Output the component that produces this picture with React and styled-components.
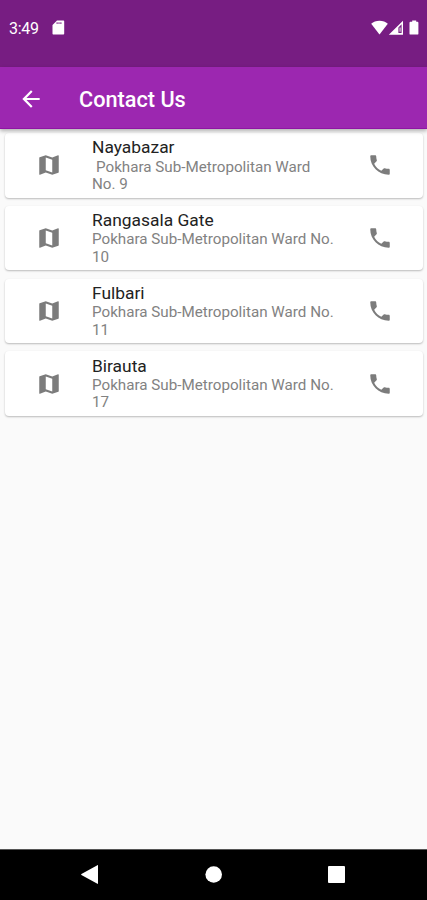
import styled, { createGlobalStyle } from 'styled-components';

const GlobalStyle = createGlobalStyle`
  * {
    box-sizing: border-box;
  }

  body {
    margin: 0;
    background: #fafafa;
    font-family: Roboto, 'Liberation Sans', sans-serif;
  }
`;

const Screen = styled.div`
  display: flex;
  flex-direction: column;
  width: 427px;
  height: 900px;
  background: #fafafa;
  overflow: hidden;
`;

const StatusBar = styled.div`
  display: flex;
  justify-content: space-between;
  flex-shrink: 0;
  height: 67px;
  padding: 19px 7px 0 9px;
  background: #771d82;
  color: #fff;
`;

const StatusGroup = styled.div`
  display: flex;
  align-items: center;
  height: 17px;
`;

const Time = styled.div`
  width: 43px;
  padding-top: 1px;
  font-size: 16px;
  line-height: 17px;
  letter-spacing: -0.3px;
`;

const AppBar = styled.div`
  display: flex;
  align-items: center;
  flex-shrink: 0;
  height: 62px;
  padding: 2px 18px 0;
  background: #9c27b0;
  border-bottom: 1px solid #8f14a4;
  box-shadow: 0 2px 4px rgba(0, 0, 0, 0.3);
  color: #fff;
  z-index: 1;
`;

const Title = styled.h1`
  margin: 2px 0 0 35px;
  font-size: 21.7px;
  font-weight: 500;
  line-height: 26px;
`;

const List = styled.div`
  display: flex;
  flex-direction: column;
  flex: 1;
  gap: 8.3px;
  padding: 4px 4.5px;
`;

const Card = styled.div`
  display: flex;
  align-items: center;
  height: 64.5px;
  padding: 0 30px 0 31px;
  border-radius: 4px;
  background: #fff;
  box-shadow: 0 1px 2px rgba(0, 0, 0, 0.26);
`;

const TextBox = styled.div`
  flex: 1;
  margin: 0 20px 0 30.5px;
  padding-top: 1.4px;
  white-space: nowrap;
`;

const Name = styled.div`
  margin-bottom: 1.2px;
  font-size: 17.4px;
  line-height: 19px;
  color: #222;
`;

const Address = styled.div`
  font-size: 15.2px;
  line-height: 17.5px;
  color: #828282;
`;

const Indent = styled.span`
  margin-left: 4px;
`;

const Icon = styled.svg`
  display: block;
  flex-shrink: 0;
  width: 26px;
  height: 26px;
  fill: ${(props) => props.$color || '#7c7c7c'};
`;

const StatusIcon = styled.svg`
  display: block;
  height: 16px;
  fill: #fff;
`;

const NavBar = styled.div`
  display: flex;
  align-items: center;
  justify-content: space-between;
  flex-shrink: 0;
  height: 51px;
  padding: 0 81px 0 80px;
  border-top: 1px solid #555;
  background: #000;
`;

const NavIcon = styled.svg`
  display: block;
  width: 20px;
  height: 20px;
  fill: #fff;
`;

const contacts = [
  { name: 'Nayabazar', address: 'Pokhara Sub-Metropolitan Ward', end: 'No. 9', indent: true },
  { name: 'Rangasala Gate', address: 'Pokhara Sub-Metropolitan Ward No.', end: '10' },
  { name: 'Fulbari', address: 'Pokhara Sub-Metropolitan Ward No.', end: '11' },
  { name: 'Birauta', address: 'Pokhara Sub-Metropolitan Ward No.', end: '17' },
];

const ContactCard = ({ contact }) => (
  <Card>
    <Icon viewBox="0 0 24 24">
      <path d="M20.5 3l-.16.03L15 5.1 9 3 3.36 4.9c-.21.07-.36.25-.36.48V20.5c0 .28.22.5.5.5l.16-.03L9 18.9l6 2.1 5.64-1.9c.21-.07.36-.25.36-.48V3.5c0-.28-.22-.5-.5-.5zM15 19l-6-2.11V5l6 2.11V19z" />
    </Icon>
    <TextBox>
      <Name>{contact.name}</Name>
      <Address>
        {contact.indent ? <Indent>{contact.address}</Indent> : contact.address}
        <br />
        {contact.end}
      </Address>
    </TextBox>
    <Icon viewBox="0 0 24 24">
      <path d="M6.62 10.79c1.44 2.83 3.76 5.14 6.59 6.59l2.2-2.2c.27-.27.67-.36 1.02-.24 1.12.37 2.33.57 3.57.57.55 0 1 .45 1 1V20c0 .55-.45 1-1 1-9.39 0-17-7.61-17-17 0-.55.45-1 1-1h3.5c.55 0 1 .45 1 1 0 1.25.2 2.45.57 3.57.11.35.03.74-.25 1.02l-2.2 2.2z" />
    </Icon>
  </Card>
);

const App = () => {
  return (
    <>
      <GlobalStyle />
      <Screen>
        <StatusBar>
          <StatusGroup>
            <Time>3:49</Time>
            {/* sd card */}
            <StatusIcon width="13" viewBox="0 0 13 16">
              <path
                fillRule="evenodd"
                d="M5 .5h6.2c.6 0 1 .4 1 1v12c0 .6-.4 1-1 1H1.5c-.6 0-1-.4-1-1V5L5 .5zM4.6 2.2v1.8h1V2.2zM6.5 2.2v1.8h1V2.2zM8.4 2.2v1.8h1V2.2z"
              />
            </StatusIcon>
          </StatusGroup>
          <StatusGroup>
            {/* wifi, signal, battery */}
            <StatusIcon width="17" viewBox="0 0 17 16">
              <path d="M8.5 14.5L.2 3.8C2.3 1.8 5.2.8 8.5.8s6.2 1 8.3 3z" />
            </StatusIcon>
            <StatusIcon width="16" viewBox="0 0 16 16">
              <path fillRule="evenodd" d="M.8 14.8L15 .8v14zM10.4 7.6v5.4h3.2V4.2z" />
              <path d="M11.6 7.4h.9v4.4h-.9z" />
            </StatusIcon>
            <StatusIcon width="16" viewBox="0 0 16 16">
              <path d="M8.2.5h4v1.3h1.3c.5 0 .9.4.9.9v11c0 .5-.4.9-.9.9H6.4c-.5 0-.9-.4-.9-.9v-11c0-.5.4-.9.9-.9h1.8z" />
            </StatusIcon>
          </StatusGroup>
        </StatusBar>
        <AppBar>
          <Icon viewBox="0 0 24 24" $color="#fff">
            <path d="M20 11H7.83l5.59-5.59L12 4l-8 8 8 8 1.41-1.41L7.83 13H20v-2z" />
          </Icon>
          <Title>Contact Us</Title>
        </AppBar>
        <List>
          {contacts.map((contact) => (
            <ContactCard key={contact.name} contact={contact} />
          ))}
        </List>
        <NavBar>
          <NavIcon viewBox="0 0 20 20">
            <path d="M1.4 9L17.4.2c.3-.2.6 0 .6.3v18c0 .3-.3.5-.6.3L1.4 10.1c-.4-.3-.4-.8 0-1.1z" />
          </NavIcon>
          <NavIcon viewBox="0 0 20 20">
            <circle cx="10.7" cy="9.5" r="8.3" />
          </NavIcon>
          <NavIcon viewBox="0 0 20 20">
            <rect x="2" y="1" width="17" height="17" rx="1" />
          </NavIcon>
        </NavBar>
      </Screen>
    </>
  );
};

export default App;
